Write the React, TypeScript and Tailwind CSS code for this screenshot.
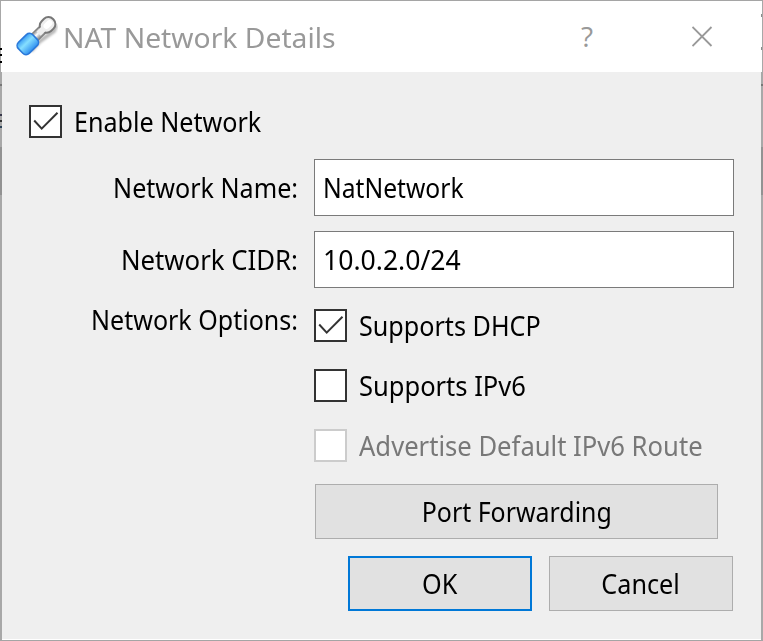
import { ReactNode } from "react";

function Check({ checked, disabled }: { checked?: boolean; disabled?: boolean }) {
  return (
    <span className={`block size-[33px] shrink-0 border-2 bg-white ${disabled ? "border-[#cccccc]" : "border-[#333333]"}`}>
      {checked && (
        <svg viewBox="0 0 29 29" className="size-[29px]" fill="none" stroke="#333" strokeWidth="2">
          <path d="M3.2 13.5 L10.7 21.6 L26.5 5.8" />
        </svg>
      )}
    </span>
  );
}

function Option({ children, checked, disabled, fit }: { children: ReactNode; checked?: boolean; disabled?: boolean; fit: string }) {
  return (
    <div className="flex h-[33px] items-center gap-[12px]">
      <Check checked={checked} disabled={disabled} />
      <span className={`-mt-[2px] origin-left ${fit} ${disabled ? "text-[#787878]" : ""}`}>{children}</span>
    </div>
  );
}

function Field({ label, value, labelFit, fit }: { label: string; value: string; labelFit: string; fit: string }) {
  return (
    <div className="flex h-[57px] items-center">
      <span className={`-mt-[2px] mr-[16px] w-[296px] shrink-0 origin-right text-right ${labelFit}`}>{label}</span>
      <div className="flex h-full w-[420px] items-center border border-[#7a7a7a] bg-white pl-[8px]">
        <span className={`-mt-[2px] origin-left ${fit}`}>{value}</span>
      </div>
    </div>
  );
}

function WrenchIcon() {
  return (
    <svg viewBox="0 0 42 42" className="size-[42px]" fill="none">
      <defs>
        <linearGradient id="handle" x1="0" y1="0" x2="0" y2="1">
          <stop offset="0" stopColor="#3a9cf2" />
          <stop offset=".4" stopColor="#86dfff" />
          <stop offset="1" stopColor="#3090f0" />
        </linearGradient>
        <linearGradient id="metal" x1="0" y1="0" x2="0" y2="1">
          <stop offset="0" stopColor="#6d6d6d" />
          <stop offset=".45" stopColor="#ffffff" />
          <stop offset="1" stopColor="#6d6d6d" />
        </linearGradient>
        <filter id="shadow" x="-20%" y="-20%" width="140%" height="140%">
          <feGaussianBlur stdDeviation="1.2" />
        </filter>
      </defs>
      <path d="M15 35 L24 25 L38 15 L40 9" stroke="#000" strokeOpacity=".28" strokeWidth="4" filter="url(#shadow)" />
      <g transform="translate(11.8 28) rotate(-44)">
        <rect x="6" y="-5" width="16" height="10" fill="url(#metal)" />
        <rect x="19.5" y="-6.8" width="16" height="13.6" rx="6.3" fill="#eeeeee" stroke="#777" strokeWidth="2" />
        <rect x="15" y="-3" width="7" height="6" fill="#eee" />
        <rect x="23" y="-3" width="10" height="6" rx="3" fill="#fff" />
        <rect x="-10" y="-7.7" width="20" height="15.4" rx="4.5" fill="url(#handle)" stroke="#2a78da" strokeWidth="1.6" />
      </g>
    </svg>
  );
}

function SideEdge() {
  return (
    <div className="flex w-[2px] shrink-0 flex-col bg-[#a8a8a8]">
      <div className="mt-[83px] h-[2px] bg-[#777777]" />
      <div className="mt-[61px] h-[48px] bg-[#929292]" />
    </div>
  );
}

export default function App() {
  return (
    <div className="flex h-[641px] w-[763px] border-t border-b border-[#a5a5a5] bg-[#efefef] font-['Noto_Sans',sans-serif] text-[28px] leading-[38px] whitespace-nowrap text-black">
      <div className="relative flex">
        <SideEdge />
        <div className="absolute top-0 left-px h-[71px] w-px bg-white" />
        <div className="absolute top-[47px] left-0 flex w-[2px] flex-col gap-[4px]">
          <i className="h-[2px] bg-black" />
          <i className="h-[2px] bg-black" />
          <i className="mt-px h-[2px] bg-black" />
        </div>
        <div className="absolute top-[113px] left-0 flex w-[2px] flex-col gap-[4px]">
          <i className="h-[2px] bg-[#37374a]" />
          <i className="h-[2px] bg-[#333333]" />
          <i className="h-[2px] bg-[#2c4257]" />
        </div>
      </div>
      <div className="flex w-[759px] flex-col border-b border-white">
        <header className="flex h-[71px] shrink-0 items-center bg-white pl-[14px] text-[#999999]">
          <WrenchIcon />
          <span className="ml-[5px] w-[268px] origin-left scale-x-[1.01]">NAT Network Details</span>
          <span className="ml-[250px] w-[30px] origin-left -translate-y-px font-['Open_Sans'] text-[28px]">?</span>
          <svg viewBox="0 0 21 21" className="ml-[81px] size-[21px] shrink-0" stroke="#999" strokeWidth="1.8">
            <path d="M.5 1 L19.5 20 M19.5 1 L.5 20" />
          </svg>
        </header>
        <main className="pt-[33px]">
          <div className="pl-[27px]">
            <Option checked fit="scale-x-[0.897]">Enable Network</Option>
          </div>
          <div className="mt-[21px] flex flex-col gap-[15px]">
            <Field label="Network Name:" labelFit="scale-x-[0.896]" value="NatNetwork" fit="scale-x-[0.88]" />
            <Field label="Network CIDR:" labelFit="scale-x-[0.92]" value="10.0.2.0/24" fit="scale-x-[0.95]" />
          </div>
          <div className="mt-[21px] flex">
            <span className="-mt-[9px] mr-[16px] w-[296px] origin-right scale-x-[0.894] text-right">Network Options:</span>
            <div className="flex flex-col gap-[27px]">
              <Option checked fit="scale-x-[0.898]">Supports DHCP</Option>
              <Option fit="scale-x-[0.911]">Supports IPv6</Option>
              <Option disabled fit="scale-x-[0.915]">Advertise Default IPv6 Route</Option>
            </div>
          </div>
          <button className="mt-[22px] ml-[313px] flex h-[55px] w-[403px] items-center justify-center border border-[#adadad] bg-[#e1e1e1]">
            <span className="-mt-[2px] scale-x-[0.89]">Port Forwarding</span>
          </button>
          <div className="mt-[17px] ml-[346px] flex gap-[17px]">
            <button className="flex h-[55px] w-[184px] items-center justify-center border-2 border-[#0078d7] bg-[#e1e1e1]">
              <span className="-mt-[2px] scale-x-[0.9]">OK</span>
            </button>
            <button className="flex h-[55px] w-[184px] items-center justify-center border border-[#adadad] bg-[#e1e1e1]">
              <span className="-mt-[2px] scale-x-[0.9]">Cancel</span>
            </button>
          </div>
        </main>
      </div>
      <div className="relative flex">
        <SideEdge />
        <div className="absolute top-0 left-0 flex h-[71px] w-px flex-col bg-white">
          <i className="mt-[13px] h-[3px] bg-[#8c8c8c]" />
          <i className="mt-[30px] h-[3px] bg-[#8c8c8c]" />
        </div>
      </div>
    </div>
  );
}
